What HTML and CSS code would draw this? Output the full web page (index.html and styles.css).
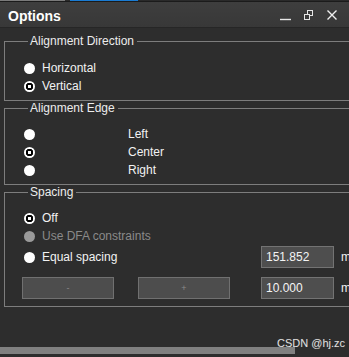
FILE: index.html
```html
<!DOCTYPE html>
<html lang="en">
<head>
    <meta charset="UTF-8">
    <title>Options</title>
    <link rel="stylesheet" href="styles.css">
</head>
<body>
    <div class="tabstrip">
        <span class="tab tab-gray"></span>
        <span class="tab tab-blue"></span>
    </div>
    <div class="titlebar">
        <span class="title">Options</span>
        <div class="controls">
            <svg width="12" height="12" viewBox="0 0 12 12"><line x1="0" y1="10.5" x2="11" y2="10.5" stroke="#e6e6e6" stroke-width="1.4"/></svg>
            <svg width="12" height="12" viewBox="0 0 12 12">
                <rect x="4.5" y="1.5" width="5" height="5" fill="none" stroke="#e6e6e6"/>
                <rect x="1.5" y="5.5" width="5" height="5" fill="#3b3b3b" stroke="#e6e6e6"/>
            </svg>
            <svg width="12" height="12" viewBox="0 0 12 12"><path d="M1.5 1.5 L10.5 10.5 M10.5 1.5 L1.5 10.5" stroke="#f0f0f0" stroke-width="1.4"/></svg>
        </div>
    </div>
    <div class="content">
        <fieldset class="group group-direction">
            <legend>Alignment Direction</legend>
            <div class="row"><span class="radio"></span><span class="label">Horizontal</span></div>
            <div class="row"><span class="radio checked"></span><span class="label">Vertical</span></div>
        </fieldset>
        <fieldset class="group group-edge">
            <legend>Alignment Edge</legend>
            <div class="row"><span class="radio"></span><span class="label far">Left</span></div>
            <div class="row"><span class="radio checked"></span><span class="label far">Center</span></div>
            <div class="row"><span class="radio"></span><span class="label far">Right</span></div>
        </fieldset>
        <fieldset class="group group-spacing">
            <legend>Spacing</legend>
            <div class="row"><span class="radio checked"></span><span class="label">Off</span></div>
            <div class="row disabled"><span class="radio"></span><span class="label">Use DFA constraints</span></div>
            <div class="row row-field">
                <span class="radio"></span><span class="label wide">Equal spacing</span>
                <span class="field">151.852</span><span class="unit">mm</span>
            </div>
            <div class="row row-buttons">
                <span class="btn">-</span>
                <span class="btn">+</span>
                <span class="field">10.000</span><span class="unit">mm</span>
            </div>
        </fieldset>
    </div>
    <div class="scrollbar"></div>
    <div class="watermark">CSDN @hj.zc</div>
</body>
</html>
```
FILE: styles.css
```css
body {
    margin: 0;
    width: 349px;
    height: 357px;
    overflow: hidden;
    position: relative;
    background-color: #2d2d2d;
    color: #f2f2f2;
    font-family: 'Liberation Sans', Arial, sans-serif;
    font-size: 12px;
}

.tabstrip {
    display: flex;
    height: 1px;
    border-bottom: 1px solid #1b1b1b;
    background-color: #2a2a2a;
}
.tab-gray {
    width: 65px;
    background-color: #7a7a7a;
}
.tab-blue {
    width: 68px;
    margin-left: 5px;
    background-color: #1a7bd2;
}

.titlebar {
    display: flex;
    align-items: center;
    height: 25px;
    padding-left: 8px;
    background: linear-gradient(#3e3e3e, #383838);
    border-bottom: 1px solid #262626;
}
.title {
    font-weight: bold;
    font-size: 14px;
    color: #ffffff;
    margin-top: 2px;
}
.controls {
    display: flex;
    gap: 11px;
    margin-left: auto;
    padding-right: 11px;
}

.content {
    padding-top: 6px;
}

.group {
    width: 400px;
    margin: 0 0 0 4px;
    padding: 0 0 0 19px;
    border: 1px solid #7d7d7d;
    box-sizing: border-box;
}
.group legend {
    margin-left: 4px;
    padding: 0 3px 0 2px;
    line-height: 14px;
    color: #ececec;
}
.group-direction {
    padding-top: 11px;
    padding-bottom: 5px;
}
.group-edge {
    padding-top: 10px;
    padding-bottom: 5px;
}
.group-spacing {
    padding-top: 10px;
    padding-bottom: 7px;
}

.row {
    display: flex;
    align-items: center;
    height: 18px;
}
.radio {
    width: 11px;
    height: 11px;
    border-radius: 50%;
    background-color: #ffffff;
    flex: none;
}
.radio.checked {
    background: radial-gradient(circle, #ffffff 0 1.5px, #000000 2px 3.5px, #ffffff 4px);
}
.label {
    margin-left: 7px;
}
.label.far {
    margin-left: 93px;
}
.label.wide {
    width: 219px;
}
.disabled {
    color: #8a8a8a;
}
.disabled .radio {
    background-color: #9a9a9a;
}

.row-field {
    height: 22px;
    margin-top: 1px;
}
.row-buttons {
    height: 22px;
    margin-top: 9px;
    margin-left: -2px;
}
.field {
    width: 73px;
    height: 22px;
    box-sizing: border-box;
    padding-left: 4px;
    line-height: 20px;
    background-color: #4e4e4e;
    border: 1px solid #737373;
    color: #f4f4f4;
}
.unit {
    margin-left: 7px;
}
.btn {
    width: 92px;
    height: 22px;
    box-sizing: border-box;
    margin-right: 24px;
    background-color: #4d4d4d;
    border: 1px solid #707070;
    color: #8a8a8a;
    font-size: 9px;
    text-align: center;
    line-height: 20px;
}
.btn + .btn {
    margin-right: 31px;
}

.scrollbar {
    width: 295px;
    height: 7px;
    margin-top: 40px;
    background-color: #808080;
}

.watermark {
    position: absolute;
    right: 4px;
    top: 337px;
    font-size: 11px;
    color: #dedede;
    text-shadow: 0 0 1px #555;
}
```
